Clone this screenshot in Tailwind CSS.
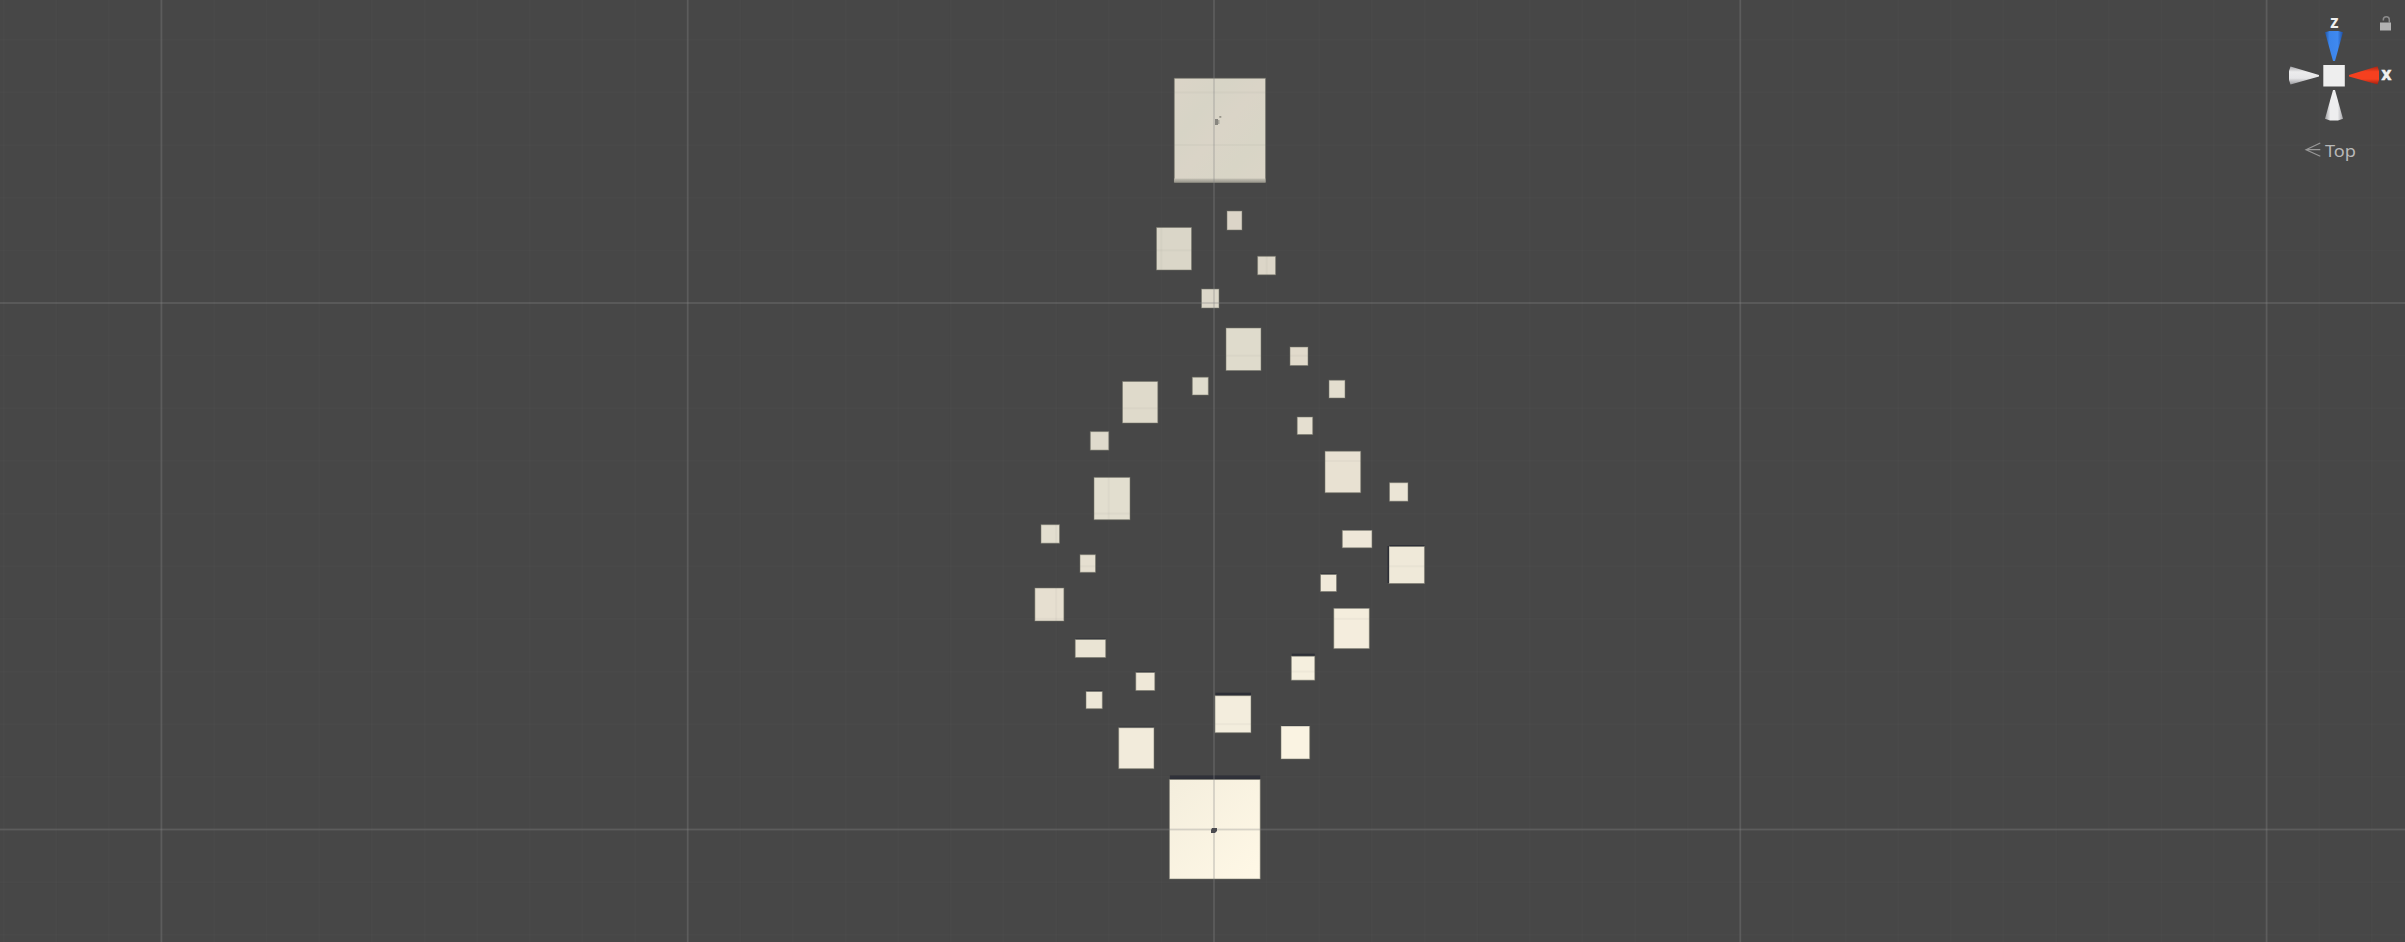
<!DOCTYPE html>
<html lang="en">
<head>
<meta charset="utf-8">
<title>Scene view</title>
<script src="https://cdn.jsdelivr.net/npm/@tailwindcss/browser@4"></script>
</head>
<body class="bg-[#474747]">
<main class="relative h-[942px] w-[2405px] overflow-hidden bg-[#474747]">
<svg id="scene" class="block h-full w-full" viewBox="0 0 2405 942">
  <defs>
    <linearGradient id="top" x1="0" y1="0" x2="1" y2="1"><stop offset="0" stop-color="#dbd4c7"/><stop offset=".3" stop-color="#d7d4c6"/><stop offset=".5" stop-color="#dad4c7"/><stop offset=".75" stop-color="#d8d5c6"/><stop offset="1" stop-color="#dbd5c7"/></linearGradient>
    <linearGradient id="base" x1="0" y1="0" x2="1" y2="1"><stop offset="0" stop-color="#f4eedd"/><stop offset="1" stop-color="#fff8e6"/></linearGradient>
    <linearGradient id="lip" x1="0" y1="0" x2="0" y2="1"><stop offset="0" stop-color="#c5c1b5"/><stop offset="1" stop-color="#96948a"/></linearGradient>
  </defs>
  <g id="blocks"></g>
  <g id="grid"></g>
  <path d="M1215 119h3v6h-3z" fill="#88867f"/><path d="M1218 120h1.500v4h-1.500z" fill="#aaa79d"/><path d="M1219.300 116h2v1.800h-2z" fill="#98958b"/>
  <path d="M1212 828h5v3l-2 2h-4v-3z" fill="#4b4b50"/>
</svg>
<svg class="absolute right-0 top-0 h-[170px] w-[140px]" viewBox="0 0 140 170">
  <defs>
    <linearGradient id="bl"><stop offset="0" stop-color="#2354a0"/><stop offset=".25" stop-color="#3b84ea"/><stop offset=".7" stop-color="#3f89f0"/><stop offset="1" stop-color="#1e4ea0"/></linearGradient>
    <linearGradient id="wh"><stop offset="0" stop-color="#9c9c9f"/><stop offset=".3" stop-color="#eeeeef"/><stop offset=".7" stop-color="#eeeeef"/><stop offset="1" stop-color="#a4a4a8"/></linearGradient>
    <linearGradient id="wv" x2="0" y2="1"><stop offset="0" stop-color="#a8a8ac"/><stop offset=".3" stop-color="#ececed"/><stop offset=".65" stop-color="#e6e6e8"/><stop offset="1" stop-color="#99999d"/></linearGradient>
    <linearGradient id="rd" x2="0" y2="1"><stop offset="0" stop-color="#a52414"/><stop offset=".3" stop-color="#f5401f"/><stop offset=".7" stop-color="#f5401f"/><stop offset="1" stop-color="#a11f10"/></linearGradient>
  </defs>
  <path d="M60 32.300L64.500 31h9l4.500 1.300L70 61h-2z" fill="url(#bl)"/>
  <path d="M68 90h2l8 28.800-5 1.700h-8l-5-1.700z" fill="url(#wh)"/>
  <path d="M25.500 66.500L54 75v1.500L25.500 84.500 24 80v-9z" fill="url(#wv)"/>
  <path d="M84 75l28.500-8.800L114 71v9l-1.500 4.500L84 76.500z" fill="url(#rd)"/>
  <path d="M58.300 65h21.500v21.500H58.300z" fill="#eeeeee"/>
  <text x="69.500" y="27.500" text-anchor="middle" fill="#f0f0f0" class="font-['Open_Sans',sans-serif] text-[17px] font-bold">z</text>
  <text x="121.300" y="80" text-anchor="middle" fill="#f0f0f0" stroke="#f0f0f0" stroke-width=".5" class="font-['Open_Sans',sans-serif] text-[17px] font-bold">x</text>
  <path d="M115 22.500h11v8h-11z" fill="#b2b2b2"/>
  <path d="M118.300 20.500v-.7a3 3 0 0 1 6 0V23" fill="none" stroke="#8b8b8b" stroke-width="1.500"/>
  <path d="M55.300 143L41 149.700l14.300 6.500M41 149.700h14.300" fill="none" stroke="#989898" stroke-width="1.200"/>
  <text x="60" y="156.500" fill="#b8b8b8" textLength="31" lengthAdjust="spacingAndGlyphs" class="font-['Noto_Sans',sans-serif] text-[16.5px]">Top</text>
</svg>
</main>
<script>
const rect = (x,y,w,h,fill) => `<rect x="${x}" y="${y}" width="${w}" height="${h}" fill="${fill}"/>`;
// Each block: left, top, width, height, fill, depth of the dark face above it
const blocks = [
 [1174.3,78.3,91.2,104,'url(#top)',0],
 [1227,211,15,19,'#dcd5c8',0],[1156.500,227.500,35,42.500,'#dad6c8',0],
 [1257.600,256.300,18,18.500,'#dcd6c8',0],[1201.500,289,17.500,19,'#dcd7c9',0],
 [1226,328,35,42.500,'#dfdbcc',0],[1290,347,18,18.500,'#e1dacb',0],
 [1192.300,377.200,16,17.800,'#dfdccd',0],[1122.500,381.500,35.300,41.500,'#dfdacb',0],
 [1329,380.200,16,17.800,'#e3decf',0],[1297.200,417,15.500,17.500,'#e5dfd0',0],
 [1090.300,431.600,18.500,18.500,'#dfdacc',0],[1325,451.200,35.700,41.500,'#e8e1d2',0],
 [1094,477.400,36,42.300,'#e2decf',0],[1389.500,482.700,18.500,18.500,'#ebe5d6',0],
 [1041,524.700,18.500,18.500,'#e2decf',0],[1342.300,530.300,29.700,17.500,'#eee7d8',.5],
 [1389,546.500,35.500,37,'#efe9d9',1.500],[1080,554.700,15.500,17.600,'#e5dfd0',0],
 [1320.500,574.500,16,17,'#f0e9d9',1],[1034.900,588,29,33,'#e6dfd0',0],
 [1333.800,608.300,35.500,40.300,'#f4eddd',.5],[1075.200,639.500,30.500,18,'#eae4d4',1],
 [1291.300,656.200,23.500,24,'#f5efde',2.500],[1135.800,672.500,19,18,'#efe8d8',1],
 [1086,691.500,16.300,17.200,'#ede7d7',1],[1215,695.700,36,37,'#f3eddd',3],
 [1118.700,727.700,35.300,41,'#f2ebdb',1],[1281,726,28.700,33,'#faf3e2',1],
 [1169.400,779.500,90.800,99.500,'url(#base)',4]
];
document.getElementById('blocks').innerHTML = blocks.map(([x,y,w,h,f,d]) =>
  (d ? rect(x+.5, y-d, w-.5, d+1, '#2d2f37') : '') +
  `<rect x="${x}" y="${y}" width="${w}" height="${h}" fill="${f}"/><rect x="${x}" y="${y}" width="${w}" height="${h}" fill="none" stroke="#77766c" stroke-opacity=".55" stroke-width="1"/>`
).join('') + rect(1174.3,178.500,91,4,'url(#lip)') + rect(1387.500,546,1.500,37,'#2d2f37');
let g = '';
for (let i = -3; i <= 42; i++) {
  const x = 161.4 + i * 52.63, major = i % 10 === 0;
  g += rect(x - (major ? .9 : 1), 0, major ? 1.8 : 2, 942, major ? 'rgba(136,136,136,.32)' : 'rgba(120,120,120,.05)');
}
for (let i = -5; i <= 12; i++) {
  const y = 303 + i * 52.65, major = i % 10 === 0;
  g += rect(0, y - (major ? .9 : 1), 2405, major ? 1.8 : 2, major ? 'rgba(136,136,136,.32)' : 'rgba(120,120,120,.05)');
}
document.getElementById('grid').innerHTML = g;
</script>
</body>
</html>
